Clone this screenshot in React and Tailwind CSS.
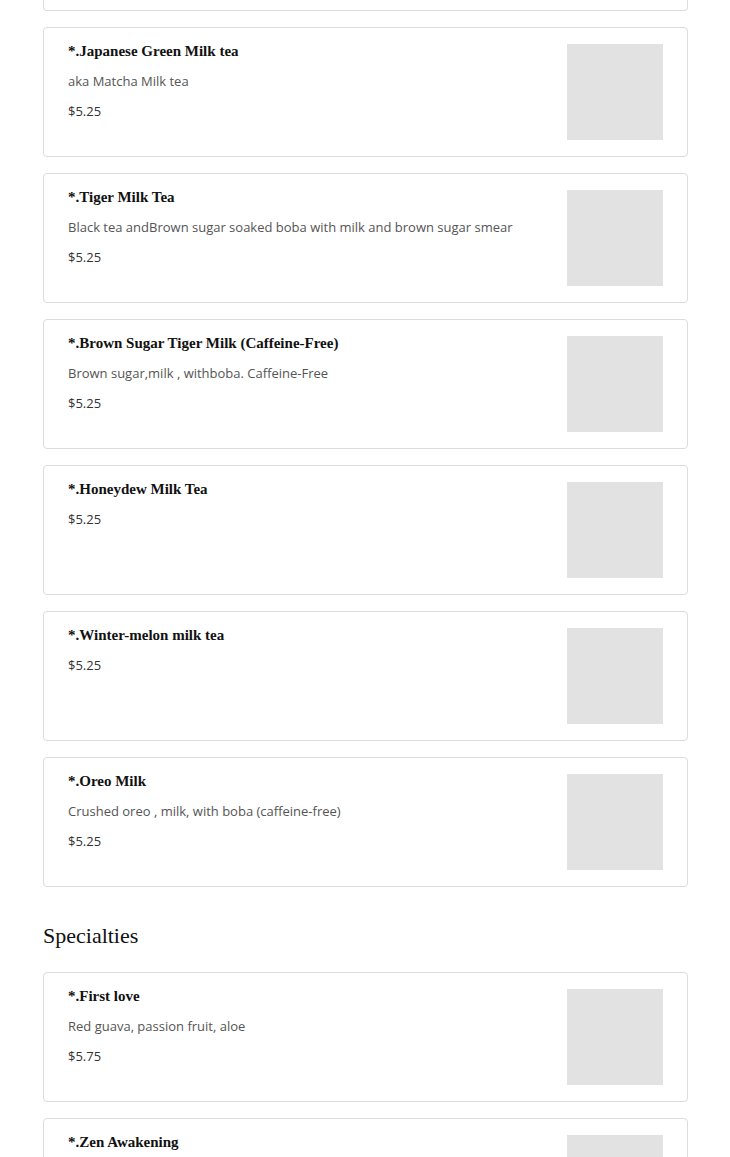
import React from "react";

const items = [
  { name: "*.Japanese Green Milk tea", desc: "aka Matcha Milk tea", price: "$5.25" },
  { name: "*.Tiger Milk Tea", desc: "Black tea andBrown sugar soaked boba with milk and brown sugar smear", price: "$5.25" },
  { name: "*.Brown Sugar Tiger Milk (Caffeine-Free)", desc: "Brown sugar,milk , withboba. Caffeine-Free", price: "$5.25" },
  { name: "*.Honeydew Milk Tea", price: "$5.25" },
  { name: "*.Winter-melon milk tea", price: "$5.25" },
  { name: "*.Oreo Milk", desc: "Crushed oreo , milk, with boba (caffeine-free)", price: "$5.25" },
];

const specialties = [
  { name: "*.First love", desc: "Red guava, passion fruit, aloe", price: "$5.75" },
  { name: "*.Zen Awakening", desc: "Matcha, honey, lemon", price: "$5.75" },
];

function Card({ item }) {
  return (
    <div className="flex border border-[#dcdcdc] rounded-[4px] px-6 py-4 bg-white">
      <div className="flex-1 min-w-0 flex flex-col">
        <div className="font-['Liberation_Serif',serif] font-bold text-[15px] leading-[14px] text-[#111] mb-[12px]">{item.name}</div>
        {item.desc && (
          <div className="font-['Open_Sans',sans-serif] text-[13px] leading-[22px] text-[#555] mb-[8px]">{item.desc}</div>
        )}
        <div className="font-['Open_Sans',sans-serif] text-[13px] leading-[22px] text-[#333]">{item.price}</div>
      </div>
      <div className="w-[96px] h-[96px] bg-[#e2e2e2] shrink-0 ml-4"></div>
    </div>
  );
}

export default function App() {
  return (
    <div className="min-h-screen bg-white pl-[43px] pr-[42px]">
      <div className="h-[11px] border-x border-b border-[#dcdcdc] rounded-b-[4px]"></div>
      <div className="flex flex-col gap-4 mt-4">
        {items.map((it) => (
          <Card key={it.name} item={it} />
        ))}
      </div>
      <h2 className="font-['Liberation_Serif',serif] text-[22px] leading-[30px] text-[#111] mt-[34px] mb-[21px]">Specialties</h2>
      <div className="flex flex-col gap-4">
        {specialties.map((it) => (
          <Card key={it.name} item={it} />
        ))}
      </div>
    </div>
  );
}
